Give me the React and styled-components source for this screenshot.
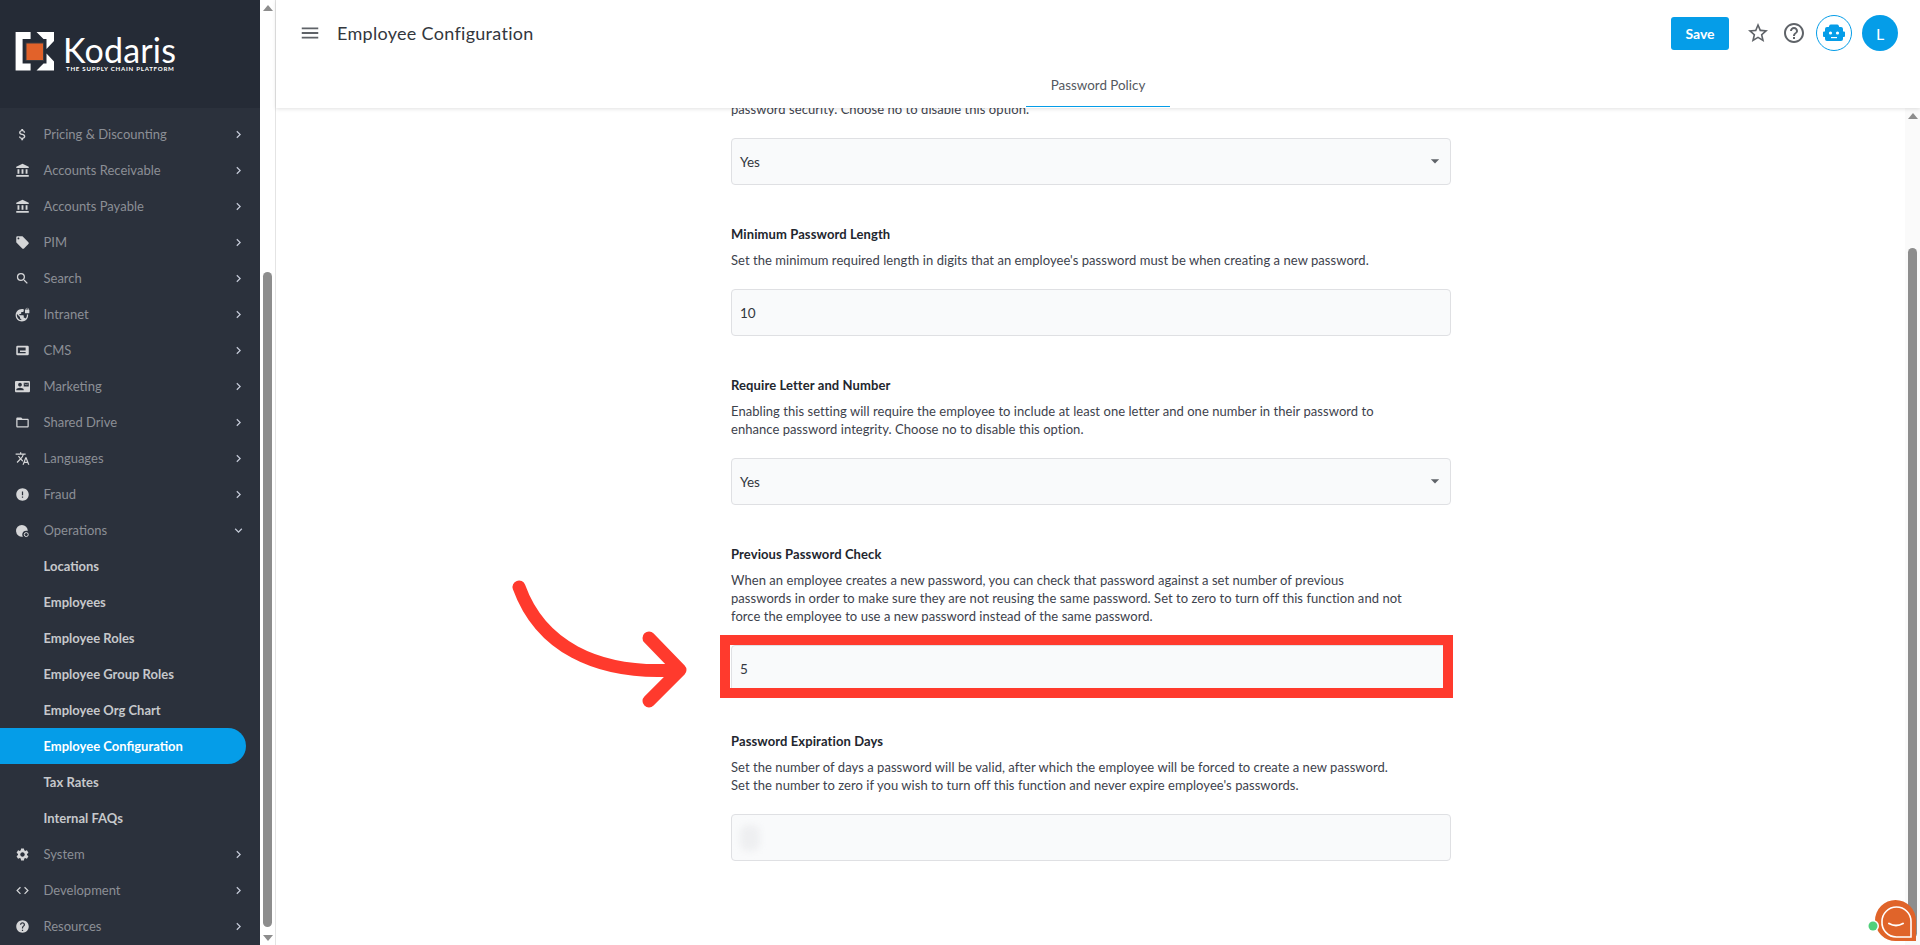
import React from "react";
import styled, { createGlobalStyle } from "styled-components";
import {
  MdAttachMoney, MdAccountBalance, MdLocalOffer, MdSearch, MdVpnLock, MdContactMail,
  MdFolderOpen, MdTranslate, MdError, MdSettings, MdCode, MdHelp, MdChevronRight, MdExpandMore,
  MdMenu, MdStarBorder, MdHelpOutline, MdArrowDropDown,
} from "react-icons/md";

const Global = createGlobalStyle`
  html, body { margin: 0; padding: 0; height: 100%; overflow: hidden; background: #fff; }
  * { box-sizing: border-box; }
  body { font-family: Lato, "Noto Sans", sans-serif; }
`;

const Page = styled.div`display: flex; width: 1920px; height: 945px; position: relative; overflow: hidden;`;
const Side = styled.aside`width: 260px; flex: none; height: 945px; background: #2b313c; display: flex; flex-direction: column;`;
const LogoBar = styled.div`height: 108px; flex: none; background: #252b36; padding: 32px 0 0 15px; display: flex;`;
const LogoWord = styled.div`margin-left: 11px; color: #fff; display: flex; flex-direction: column; line-height: 1;`;
const LogoName = styled.span`font-size: 34px; font-weight: 400; height: 26px; line-height: 26px; margin: 5px 0 0 -3px; letter-spacing: .2px;`;
const LogoTag = styled.span`font-size: 6.1px; font-weight: 700; letter-spacing: .75px; margin-top: 3px; white-space: nowrap;`;
const Nav = styled.nav`padding-top: 8px; display: flex; flex-direction: column;`;
const Row = styled.div`
  height: 36px; display: flex; align-items: center; width: 246px; position: relative;
  padding-left: ${p => (p.$sub ? "43.5px" : "14px")};
  font-size: 13px; letter-spacing: 0;
  font-weight: ${p => (p.$sub ? 700 : 400)};
  color: ${p => (p.$active ? "#fff" : p.$sub ? "#c6c8cb" : "#8b8f96")};
  background: ${p => (p.$active ? "#059de8" : "transparent")};
  border-radius: ${p => (p.$active ? "0 18px 18px 0" : "0")};
`;
const RowIcon = styled.span`width: 16px; height: 16px; font-size: 15px; display: flex; align-items: center; justify-content: center; color: #d5d6d8; margin-right: 13.5px;`;
const RowLabel = styled.span`flex: 1; white-space: nowrap;`;
const RowChevron = styled.span`width: 16px; display: flex; justify-content: center; font-size: 15px; color: #c3c9d6; position: absolute; left: 230px;`;

const Track = styled.div`flex: none; height: 945px; background: #fff; border-right: 1px solid #e4e4e4; width: 16px; position: relative;`;
const Thumb = styled.div`position: absolute; left: 3px; width: 9px; top: ${p => p.$top}px; height: ${p => p.$h}px; background: #8d8d8d; border-radius: 5px;`;
const Caret = styled.div`position: absolute; left: 3px; ${p => (p.$down ? "bottom: 4px;" : "top: 5px;")} width: 0; height: 0; border-left: 5px solid transparent; border-right: 5px solid transparent;
  ${p => (p.$down ? "border-top: 6px solid #8d8d8d;" : "border-bottom: 6px solid #8d8d8d;")}`;

const Main = styled.main`flex: 1; min-width: 0; height: 945px; display: flex; flex-direction: column; position: relative;`;
const Header = styled.header`height: 108px; flex: none; background: #fff; box-shadow: 0 1px 4px rgba(0,0,0,.12); position: relative; z-index: 2; display: flex; flex-direction: column;`;
const TopRow = styled.div`height: 66px; display: flex; align-items: center; padding: 0 22px 0 23px;`;
const Burger = styled.span`font-size: 22px; color: #5f6368; display: flex; margin-right: 16px;`;
const Title = styled.h1`margin: 0; font-size: 18px; font-weight: 400; color: #33373d; flex: 1; letter-spacing: .3px;`;
const SaveBtn = styled.button`width: 58px; height: 33px; border: 0; border-radius: 3px; background: #059de8; color: #fff; font: 700 14px Lato, sans-serif; margin-right: 17px;`;
const ToolIcon = styled.span`font-size: 24px; color: #5f6368; display: flex; margin-right: ${p => p.$mr}px;`;
const BotCircle = styled.span`width: 36px; height: 36px; border-radius: 50%; border: 1px solid #059de8; display: flex; align-items: center; justify-content: center; margin-right: 10px;`;
const Avatar = styled.span`width: 36px; height: 36px; border-radius: 50%; background: #059de8; color: #fff; font-size: 16px; display: flex; align-items: center; justify-content: center;`;
const TabRow = styled.div`display: flex; justify-content: center; height: 42px;`;
const Tab = styled.div`width: 144px; height: 41px; border-bottom: 1px solid #059de8; text-align: center; font-size: 13.4px; color: #55595f; line-height: 20px; padding-top: 9px;`;

const Body = styled.div`flex: 1; min-height: 0; display: flex; overflow: hidden;`;
const Scroll = styled.div`flex: 1; min-width: 0; overflow: hidden; display: flex; justify-content: center; padding-left: 1px;`;
const Column = styled.div`width: 720px; display: flex; flex-direction: column;`;
const Field = styled.section`display: flex; flex-direction: column; margin-bottom: 40px;`;
const Label = styled.h3`margin: 0 0 8px; font-size: 13px; font-weight: 700; color: #22262e; line-height: 18px; letter-spacing: .1px;`;
const Help = styled.p`margin: ${p => (p.$clip ? "-8px" : "0")} 0 20px; font-size: 13px; line-height: 18px; color: #3d424c; letter-spacing: .05px; white-space: pre-line;`;
const Input = styled.div`height: 47px; border: 1px solid #dfe0e3; border-radius: 4px; background: #f9fafb; display: flex; align-items: center; padding: 0 8px; font-size: 13.5px; color: #33373d; position: relative;`;
const Drop = styled.span`position: absolute; right: 5px; top: 12px; font-size: 20px; color: #5f6368; display: flex;`;
const Blur = styled.span`width: 20px; height: 26px; background: #eeeff1; border-radius: 8px; filter: blur(3px);`;
const RightTrack = styled.div`width: 15px; flex: none; position: relative; background: #fafafa;`;

const RedBox = styled.div`position: absolute; left: 720px; top: 635px; width: 733px; height: 63px; border: 10px solid #ff3a2d; z-index: 3;`;
const Arrow = styled.svg`position: absolute; left: 500px; top: 570px; z-index: 3;`;
const Chat = styled.svg`position: absolute; right: 4px; bottom: 4px; z-index: 4;`;

const CmsIcon = () => (
  <svg width="1em" height="1em" viewBox="0 0 24 24" fill="currentColor">
    <path fillRule="evenodd" d="M4 4.5h16a2 2 0 0 1 2 2v11a2 2 0 0 1-2 2H4a2 2 0 0 1-2-2v-11a2 2 0 0 1 2-2zM4.5 7v9.5H17v-2H8V12h9V7z" />
  </svg>
);
const OpsIcon = () => (
  <svg width="1em" height="1em" viewBox="0 0 24 24" fill="currentColor">
    <path d="M11 3a9.5 9.5 0 1 0 1.5 18.9c-.6-1-1-2.2-.9-3.4.1-3.5 3-6.300 6.500-6.100.8 0 1.500.2 2.300.5A9.500 9.500 0 0 0 11 3z" />
    <circle cx="18" cy="18.500" r="3.200" fill="none" stroke="currentColor" strokeWidth="1.600" />
  </svg>
);

const items = [
  ["Pricing & Discounting", MdAttachMoney],
  ["Accounts Receivable", MdAccountBalance],
  ["Accounts Payable", MdAccountBalance],
  ["PIM", MdLocalOffer],
  ["Search", MdSearch],
  ["Intranet", MdVpnLock],
  ["CMS", CmsIcon],
  ["Marketing", MdContactMail],
  ["Shared Drive", MdFolderOpen],
  ["Languages", MdTranslate],
  ["Fraud", MdError],
];
const subs = ["Locations", "Employees", "Employee Roles", "Employee Group Roles", "Employee Org Chart", "Employee Configuration", "Tax Rates", "Internal FAQs"];
const after = [["System", MdSettings], ["Development", MdCode], ["Resources", MdHelp]];

const NavItem = ({ label, Icon, open }) => (
  <Row>
    <RowIcon><Icon /></RowIcon>
    <RowLabel>{label}</RowLabel>
    <RowChevron>{open ? <MdExpandMore /> : <MdChevronRight />}</RowChevron>
  </Row>
);

const Logo = () => (
  <svg width="40" height="39" viewBox="0 0 40 39">
    <path fill="#fff" d="M.6 0H15.600V7H7.600V31.400H15.600V38.400H.6z" />
    <path fill="#fff" d="M21.500 0H39V9L31.500 17V7H28.500zM21.500 38.400H39V29.500L31.500 21.500V31.400H28.500z" />
    <rect x="11" y="11" width="17.500" height="17.500" fill="#e2622a" stroke="#3c3d42" strokeWidth="1" />
  </svg>
);

const Bot = () => (
  <svg width="22" height="20" viewBox="0 0 22 20">
    <path fill="#059de8" d="M8 1.500h6a2 2 0 0 1 1.900 1.400l.3 1.100H18a2 2 0 0 1 2 2v2.500h1a1 1 0 0 1 1 1V13a1 1 0 0 1-1 1h-1v2a2 2 0 0 1-2 2H4a2 2 0 0 1-2-2v-2H1a1 1 0 0 1-1-1V9.500a1 1 0 0 1 1-1h1V6a2 2 0 0 1 2-2h1.800l.3-1.100A2 2 0 0 1 8 1.500z" />
    <circle cx="7.500" cy="10" r="1.600" fill="#fff" /><circle cx="14.500" cy="10" r="1.600" fill="#fff" />
    <rect x="8" y="14" width="6" height="1.200" fill="#fff" />
  </svg>
);

export default function App() {
  return (
    <Page>
      <Global />
      <Side>
        <LogoBar>
          <Logo />
          <LogoWord>
            <LogoName>Kodaris</LogoName>
            <LogoTag>THE SUPPLY CHAIN PLATFORM</LogoTag>
          </LogoWord>
        </LogoBar>
        <Nav>
          {items.map(([l, I]) => <NavItem key={l} label={l} Icon={I} />)}
          <NavItem label="Operations" Icon={OpsIcon} open />
          {subs.map(s => <Row key={s} $sub $active={s === "Employee Configuration"}><RowLabel>{s}</RowLabel></Row>)}
          {after.map(([l, I]) => <NavItem key={l} label={l} Icon={I} />)}
        </Nav>
      </Side>
      <Track>
        <Caret />
        <Thumb $top={272} $h={655} />
        <Caret $down />
      </Track>
      <Main>
        <Header>
          <TopRow>
            <Burger><MdMenu /></Burger>
            <Title>Employee Configuration</Title>
            <SaveBtn>Save</SaveBtn>
            <ToolIcon $mr={12}><MdStarBorder /></ToolIcon>
            <ToolIcon $mr={10}><MdHelpOutline /></ToolIcon>
            <BotCircle><Bot /></BotCircle>
            <Avatar>L</Avatar>
          </TopRow>
          <TabRow><Tab>Password Policy</Tab></TabRow>
        </Header>
        <Body>
          <Scroll>
            <Column>
              <Field>
                <Help $clip>password security. Choose no to disable this option.</Help>
                <Input>Yes<Drop><MdArrowDropDown /></Drop></Input>
              </Field>
              <Field>
                <Label>Minimum Password Length</Label>
                <Help>Set the minimum required length in digits that an employee's password must be when creating a new password.</Help>
                <Input>10</Input>
              </Field>
              <Field>
                <Label>Require Letter and Number</Label>
                <Help>{"Enabling this setting will require the employee to include at least one letter and one number in their password to\nenhance password integrity. Choose no to disable this option."}</Help>
                <Input>Yes<Drop><MdArrowDropDown /></Drop></Input>
              </Field>
              <Field>
                <Label>Previous Password Check</Label>
                <Help>{"When an employee creates a new password, you can check that password against a set number of previous\npasswords in order to make sure they are not reusing the same password. Set to zero to turn off this function and not\nforce the employee to use a new password instead of the same password."}</Help>
                <Input>5</Input>
              </Field>
              <Field>
                <Label>Password Expiration Days</Label>
                <Help>{"Set the number of days a password will be valid, after which the employee will be forced to create a new password.\nSet the number to zero if you wish to turn off this function and never expire employee's passwords."}</Help>
                <Input><Blur /></Input>
              </Field>
            </Column>
          </Scroll>
          <RightTrack>
            <Caret />
            <Thumb $top={140} $h={690} />
          </RightTrack>
        </Body>
      </Main>
      <RedBox />
      <Arrow width="200" height="150" viewBox="0 0 200 150">
        <path d="M19 17C40 75 95 105 175 100" fill="none" stroke="#ff3a2d" strokeWidth="13" strokeLinecap="round" />
        <path d="M149 68L180 100L149 131" fill="none" stroke="#ff3a2d" strokeWidth="13" strokeLinecap="round" strokeLinejoin="round" />
      </Arrow>
      <Chat width="48" height="46" viewBox="0 0 48 46">
        <path fill="#e0642a" d="M7 25.500a20.500 20.500 0 0 1 41 0V46H27.500A20.500 20.500 0 0 1 7 25.500z" />
        <circle cx="5" cy="31" r="6" fill="#fff" />
        <circle cx="5" cy="31" r="4.500" fill="#4fd07a" />
        <path fill="none" stroke="#fff" strokeWidth="1.600" d="M14 26.500a14.500 14.500 0 0 1 29 0V42H28.500A14.500 14.500 0 0 1 14 26.500z" />
        <path fill="none" stroke="#fff" strokeWidth="2" strokeLinecap="round" d="M21 28.500q7 4 14 0" />
      </Chat>
    </Page>
  );
}
